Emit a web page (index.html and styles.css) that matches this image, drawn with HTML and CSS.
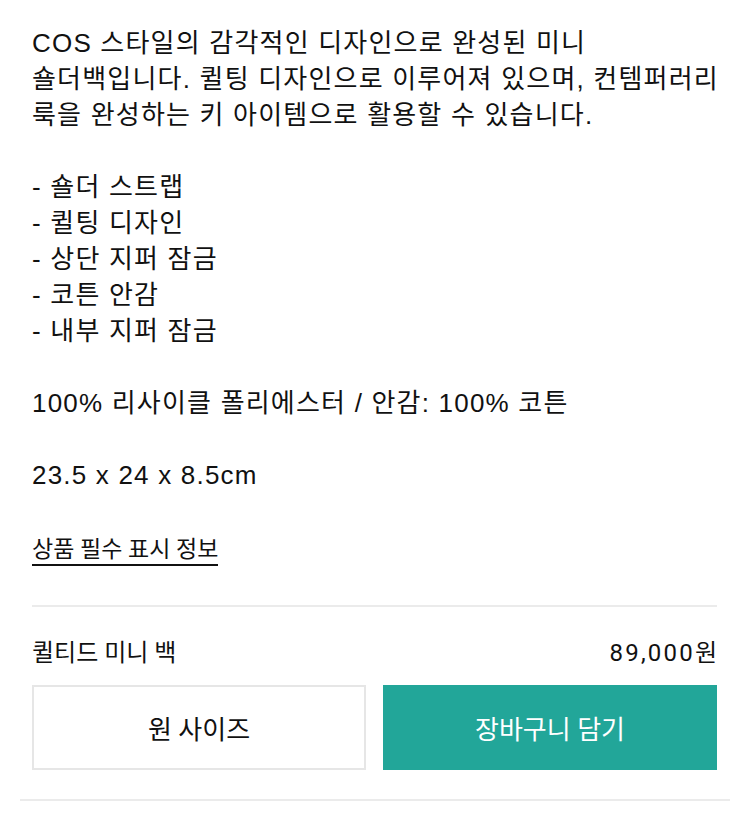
FILE: index.html
```html
<!DOCTYPE html>
<html lang="ko">
<head>
<meta charset="utf-8">
<title>퀼티드 미니 백</title>
<link rel="stylesheet" href="styles.css">
</head>
<body>
<div class="page">
  <div class="desc">COS 스타일의 감각적인 디자인으로 완성된 미니 숄더백입니다. 퀼팅 디자인으로 이루어져 있으며, 컨템퍼러리 룩을 완성하는 키 아이템으로 활용할 수 있습니다.

- 숄더 스트랩
- 퀼팅 디자인
- 상단 지퍼 잠금
- 코튼 안감
- 내부 지퍼 잠금

100% 리사이클 폴리에스터 / 안감: 100% 코튼

23.5 x 24 x 8.5cm</div>
  <div class="info"><a class="info-link" href="#">상품 필수 표시 정보</a></div>
  <div class="divider"></div>
  <div class="product-row">
    <span class="product-name">퀼티드 미니 백</span>
    <span class="product-price">89,000원</span>
  </div>
  <div class="actions">
    <button class="btn btn-size">원 사이즈</button>
    <button class="btn btn-cart">장바구니 담기</button>
  </div>
  <div class="bottom-divider"></div>
</div>
</body>
</html>
```
FILE: styles.css
```css
html, body {
  margin: 0;
  padding: 0;
  background: #fff;
}
.page {
  width: 750px;
  color: #111;
}
.desc {
  padding: 25px 18px 0 32px;
  font-family: "Liberation Sans", "Noto Sans CJK KR", sans-serif;
  font-size: 26px;
  letter-spacing: 1.2px;
  line-height: 36px;
  white-space: pre-line;
  word-break: keep-all;
}
.info {
  padding: 43px 32px 0;
  line-height: 28px;
}
.info-link {
  display: inline-block;
  font-family: Roboto, "Noto Sans CJK KR", sans-serif;
  font-size: 23px;
  line-height: 28px;
  color: #111;
  text-decoration: none;
  border-bottom: 2px solid #111;
}
.divider {
  margin: 39px 33px 0 32px;
  height: 2px;
  background: #ebebeb;
}
.product-row {
  display: flex;
  justify-content: space-between;
  align-items: center;
  padding: 31px 33px 0 32px;
  font-family: Roboto, "Noto Sans CJK KR", sans-serif;
  font-size: 24px;
  line-height: 30px;
}
.product-price {
  letter-spacing: 2.2px;
  margin-right: -2.2px;
}
.actions {
  display: flex;
  gap: 17px;
  padding: 17px 33px 0 32px;
}
.btn {
  flex: 1 1 0;
  min-width: 0;
  height: 85px;
  padding: 0;
  font-family: Roboto, "Noto Sans CJK KR", sans-serif;
  font-size: 26px;
  cursor: pointer;
  box-sizing: border-box;
}
.btn-size {
  background: #fff;
  color: #111;
  border: 2px solid #e6e6e6;
}
.btn-cart {
  background: #22a699;
  color: #fff;
  border: 2px solid #22a699;
}
.bottom-divider {
  margin: 29px 20px 0 20px;
  height: 2px;
  background: #ebebeb;
}
```
